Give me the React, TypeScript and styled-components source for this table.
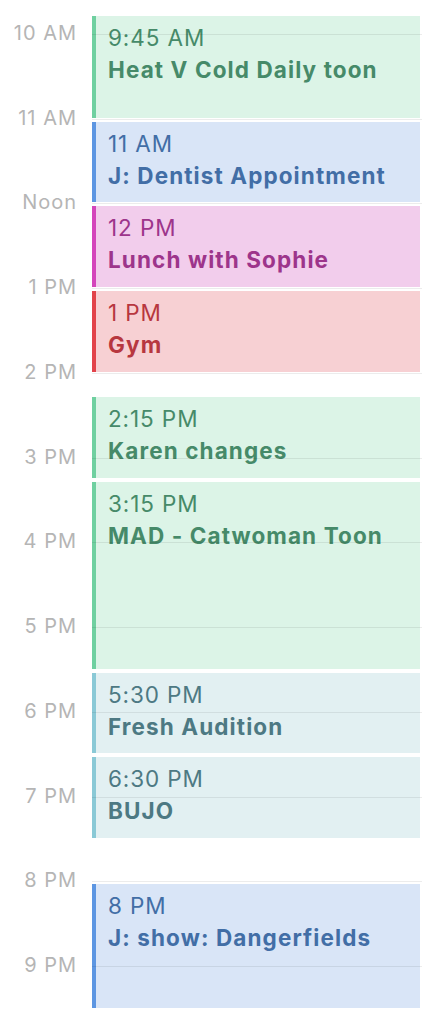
import React from "react";
import styled, { createGlobalStyle } from "styled-components";

const START = 9 * 60 + 45;
const QUARTER = 21.2;
const ROWS = 50;

const GlobalStyle = createGlobalStyle`
  html, body { margin: 0; padding: 0; background: #ffffff; }
  body { font-family: Inter, "Noto Sans", sans-serif; -webkit-font-smoothing: antialiased; }
`;

type Tone = "green" | "blue" | "pink" | "red" | "teal";

const tones: Record<Tone, { bg: string; bar: string; text: string }> = {
  green: { bg: "#dcf4e7", bar: "#6fd0a0", text: "#468a69" },
  blue: { bg: "#d9e5f7", bar: "#5d96e2", text: "#426ea6" },
  pink: { bg: "#f2cdec", bar: "#d445bb", text: "#9d358b" },
  red: { bg: "#f7d0d3", bar: "#e2434a", text: "#b7373f" },
  teal: { bg: "#e2f0f2", bar: "#8ac9d6", text: "#4d7983" },
};

const rowOf = (min: number) => Math.round((min - START) / 15) + 1;

const Timeline = styled.div`
  display: grid;
  grid-template-columns: 92px 1fr 2px;
  grid-template-rows: repeat(${ROWS}, ${QUARTER}px);
  padding-top: 12.8px;
  height: 1022px;
  box-sizing: border-box;
  overflow: hidden;
`;

const HourLabel = styled.div<{ $row: number }>`
  grid-column: 1;
  grid-row: ${(p) => p.$row};
  align-self: start;
  margin-top: -12px;
  padding-right: 15px;
  text-align: right;
  font-size: 20px;
  line-height: 22px;
  color: #b5b5b5;
  letter-spacing: 1px;
  white-space: nowrap;
`;

const HourLine = styled.div<{ $row: number }>`
  grid-column: 2 / 4;
  grid-row: ${(p) => p.$row};
  align-self: start;
  height: 1px;
  background: rgba(0, 0, 0, 0.075);
  z-index: 2;
`;

const EventCard = styled.div<{ $start: number; $end: number; $tone: Tone }>`
  grid-column: 2;
  grid-row: ${(p) => `${p.$start} / ${p.$end}`};
  margin: 3px 0 1px 0;
  background: ${(p) => tones[p.$tone].bg};
  border-left: 4px solid ${(p) => tones[p.$tone].bar};
  color: ${(p) => tones[p.$tone].text};
  padding: 6px 0 0 12px;
  overflow: hidden;
  z-index: 1;
`;

const EventTime = styled.div`
  font-size: 22.5px;
  line-height: 32px;
  font-weight: 400;
  letter-spacing: 0.9px;
  white-space: nowrap;
`;

const EventTitle = styled.div`
  font-size: 22.5px;
  line-height: 32px;
  font-weight: 700;
  letter-spacing: 1.1px;
  white-space: nowrap;
`;

const hours = [
  { h: 10, label: "10 AM" },
  { h: 11, label: "11 AM" },
  { h: 12, label: "Noon" },
  { h: 13, label: "1 PM" },
  { h: 14, label: "2 PM" },
  { h: 15, label: "3 PM" },
  { h: 16, label: "4 PM" },
  { h: 17, label: "5 PM" },
  { h: 18, label: "6 PM" },
  { h: 19, label: "7 PM" },
  { h: 20, label: "8 PM" },
  { h: 21, label: "9 PM" },
];

const events: { s: number; e: number; time: string; title: string; tone: Tone }[] = [
  { s: 585, e: 660, time: "9:45 AM", title: "Heat V Cold Daily toon", tone: "green" },
  { s: 660, e: 720, time: "11 AM", title: "J: Dentist Appointment", tone: "blue" },
  { s: 720, e: 780, time: "12 PM", title: "Lunch with Sophie", tone: "pink" },
  { s: 780, e: 840, time: "1 PM", title: "Gym", tone: "red" },
  { s: 855, e: 915, time: "2:15 PM", title: "Karen changes", tone: "green" },
  { s: 915, e: 1050, time: "3:15 PM", title: "MAD - Catwoman Toon", tone: "green" },
  { s: 1050, e: 1110, time: "5:30 PM", title: "Fresh Audition", tone: "teal" },
  { s: 1110, e: 1170, time: "6:30 PM", title: "BUJO", tone: "teal" },
  { s: 1200, e: 1290, time: "8 PM", title: "J: show: Dangerfields", tone: "blue" },
];

export default function App() {
  return (
    <>
      <GlobalStyle />
      <Timeline>
        {hours.map((h) => (
          <React.Fragment key={h.h}>
            <HourLabel $row={rowOf(h.h * 60)}>{h.label}</HourLabel>
            <HourLine $row={rowOf(h.h * 60)} />
          </React.Fragment>
        ))}
        {events.map((ev) => (
          <EventCard key={ev.s} $start={rowOf(ev.s)} $end={rowOf(ev.e)} $tone={ev.tone}>
            <EventTime>{ev.time}</EventTime>
            <EventTitle>{ev.title}</EventTitle>
          </EventCard>
        ))}
      </Timeline>
    </>
  );
}
